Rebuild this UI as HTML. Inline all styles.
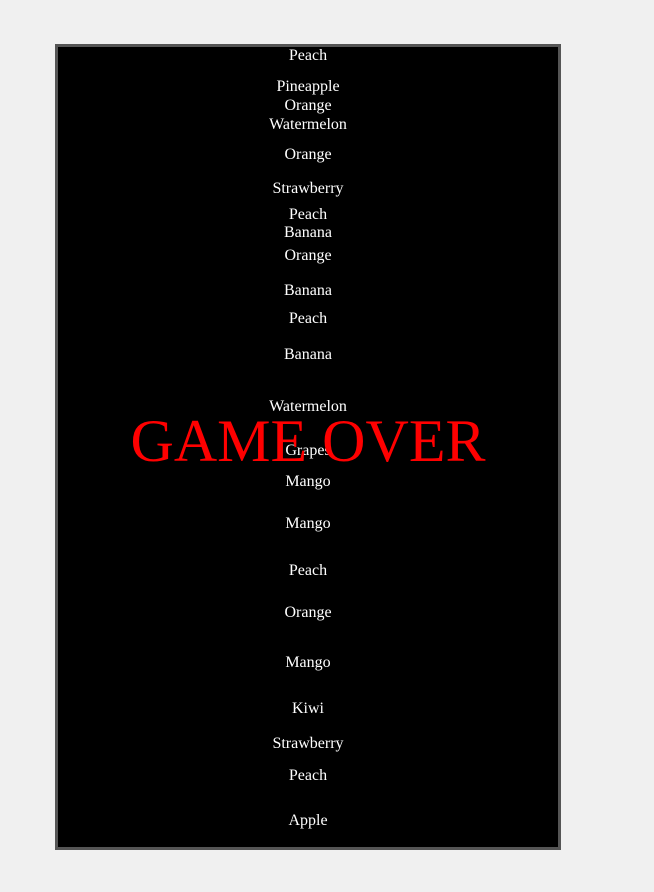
<!DOCTYPE html>
<html><head><style>
html,body{margin:0;padding:0;background:#f0f0f0;width:654px;height:892px;overflow:hidden}
#box{position:absolute;left:55px;top:44px;width:500px;height:800px;border:3px solid #555;background:#000;overflow:hidden;font-family:"Liberation Serif",serif}
.f{position:absolute;left:0;width:500px;text-align:center;color:#fff;font-size:16px;line-height:18px}
#go{position:absolute;left:0;width:500px;text-align:center;color:#f00;font-size:60px;line-height:70px;top:359px;white-space:nowrap}
</style></head><body>
<div id="box">
<div class="f" style="top:0px">Peach</div>
<div class="f" style="top:31px">Pineapple</div>
<div class="f" style="top:50px">Orange</div>
<div class="f" style="top:69px">Watermelon</div>
<div class="f" style="top:99px">Orange</div>
<div class="f" style="top:133px">Strawberry</div>
<div class="f" style="top:159px">Peach</div>
<div class="f" style="top:177px">Banana</div>
<div class="f" style="top:200px">Orange</div>
<div class="f" style="top:235px">Banana</div>
<div class="f" style="top:263px">Peach</div>
<div class="f" style="top:299px">Banana</div>
<div class="f" style="top:351px">Watermelon</div>
<div class="f" style="top:395px">Grapes</div>
<div class="f" style="top:426px">Mango</div>
<div class="f" style="top:468px">Mango</div>
<div class="f" style="top:515px">Peach</div>
<div class="f" style="top:557px">Orange</div>
<div class="f" style="top:607px">Mango</div>
<div class="f" style="top:653px">Kiwi</div>
<div class="f" style="top:688px">Strawberry</div>
<div class="f" style="top:720px">Peach</div>
<div class="f" style="top:765px">Apple</div>
<div id="go">GAME OVER</div>
</div>
</body></html>
